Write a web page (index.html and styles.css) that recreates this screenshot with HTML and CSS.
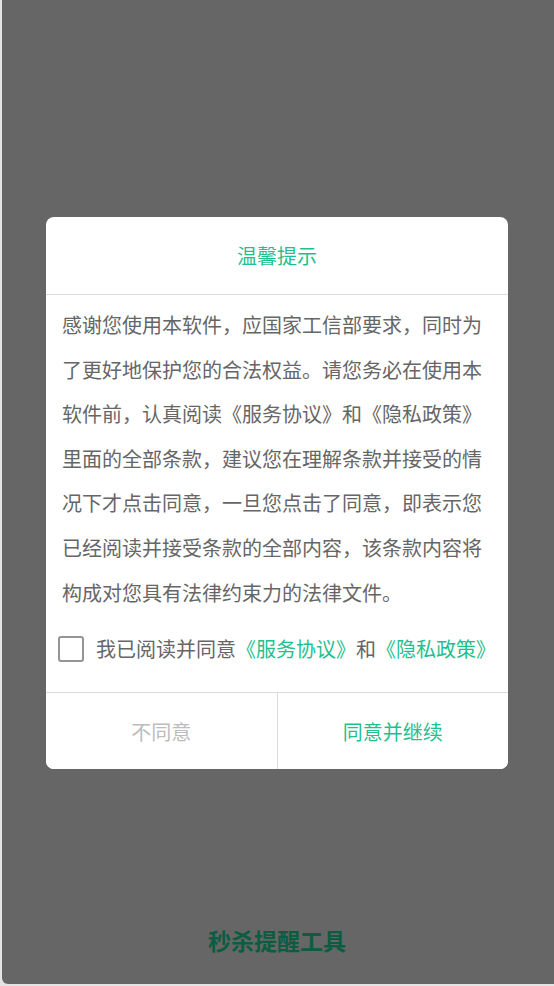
FILE: index.html
```html
<!DOCTYPE html>
<html lang="zh-CN">
<head>
    <meta charset="UTF-8">
    <meta name="viewport" content="width=device-width, initial-scale=1.0">
    <title>秒杀提醒工具</title>
    <link rel="stylesheet" href="styles.css">
</head>
<body>
    <div class="mask">
        <div class="dialog">
            <div class="dialog-title">温馨提示</div>

            <div class="dialog-body">
                <p class="notice">感谢您使用本软件，应国家工信部要求，同时为了更好地保护您的合法权益。请您务必在使用本软件前，认真阅读《服务协议》和《隐私政策》里面的全部条款，建议您在理解条款并接受的情况下才点击同意，一旦您点击了同意，即表示您已经阅读并接受条款的全部内容，该条款内容将构成对您具有法律约束力的法律文件。</p>

                <label class="agree-row">
                    <span class="check-box"></span>
                    <span>我已阅读并同意<a href="#" class="link">《服务协议》</a>和<a href="#" class="link">《隐私政策》</a></span>
                </label>
            </div>

            <div class="dialog-footer">
                <button class="btn btn-cancel">不同意</button>
                <button class="btn btn-ok">同意并继续</button>
            </div>
        </div>

        <div class="app-name">秒杀提醒工具</div>
    </div>
</body>
</html>
```

FILE: styles.css
```css
* {
    box-sizing: border-box;
    margin: 0;
    padding: 0;
}

body {
    font-family: "Noto Sans CJK SC", "Noto Sans", sans-serif;
    background-color: #e4e4e4;
    height: 986px;
    overflow: hidden;
}

.mask {
    position: fixed;
    top: 0;
    left: 2px;
    right: 0;
    bottom: 2px;
    background: #666666;
    border-radius: 0 0 0 6px;
    display: flex;
    flex-direction: column;
    align-items: center;
    padding-top: 217px;
}

.dialog {
    width: 462px;
    margin-left: -2px;
    background: white;
    border-radius: 8px;
    overflow: hidden;
}

.dialog-title {
    height: 78px;
    line-height: 78px;
    text-align: center;
    font-size: 20px;
    color: #1fbf8f;
    border-bottom: 1px solid #dcdcdc;
}

.dialog-body {
    padding: 8px 16px 0 12px;
}

.notice {
    padding-left: 4px;
    font-size: 20px;
    line-height: 44.6px;
    color: #666;
}

.agree-row {
    display: flex;
    align-items: center;
    gap: 12px;
    margin-top: 21px;
    padding-bottom: 30px;
    font-size: 20px;
    line-height: 26px;
    color: #666;
    white-space: nowrap;
}

.check-box {
    width: 26px;
    height: 26px;
    border: 2px solid #959595;
    border-radius: 3px;
    flex-shrink: 0;
}

.link {
    color: #1fbf8f;
    text-decoration: none;
}

.dialog-footer {
    display: flex;
    border-top: 1px solid #dcdcdc;
}

.btn {
    flex: 1;
    height: 76px;
    border: none;
    background: white;
    font-family: inherit;
    font-size: 20px;
    cursor: pointer;
}

.btn-cancel {
    color: #bcbcbc;
    border-right: 1px solid #dcdcdc;
}

.btn-ok {
    color: #1fbf8f;
}

.app-name {
    margin-top: auto;
    margin-bottom: 32px;
    margin-left: -2px;
    font-size: 23px;
    font-weight: bold;
    line-height: 24px;
    color: #0c5c42;
}
```
